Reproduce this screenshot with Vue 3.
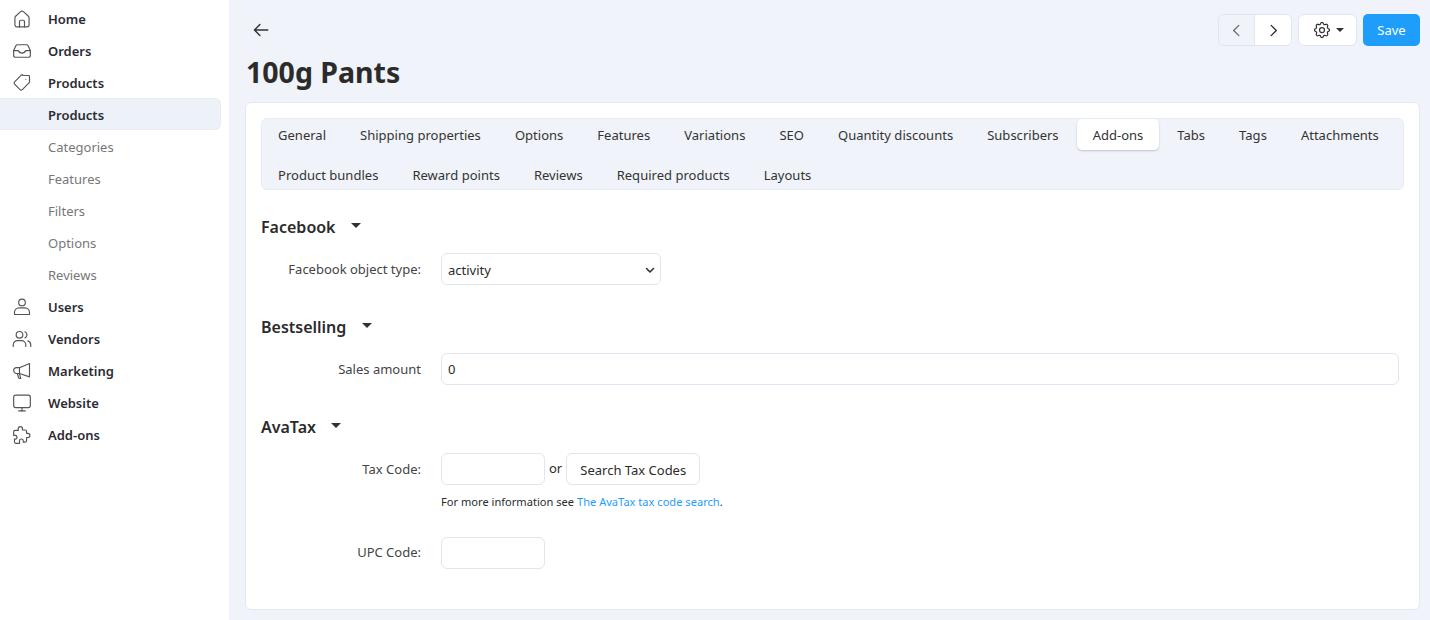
<template>
  <div class="page">
    <aside class="sidebar">
      <template v-for="item in menu" :key="item.label">
        <a class="nav-item" :class="{ sub: item.sub, active: item.active }">
          <svg v-if="item.icon" class="nav-icon" viewBox="0 0 24 24" fill="none" stroke="#555" stroke-width="1.4" stroke-linecap="round" stroke-linejoin="round">
            <path v-for="d in icons[item.icon]" :key="d" :d="d" />
          </svg>
          <span>{{ item.label }}</span>
        </a>
      </template>
    </aside>

    <main class="content">
      <div class="topbar">
        <svg class="back" viewBox="0 0 16 16" fill="none" stroke="#333" stroke-width="1.3" stroke-linecap="round" stroke-linejoin="round">
          <path d="M14 8H2.5M7 3.2 2.2 8 7 12.8" />
        </svg>
        <div class="actions">
          <div class="pager">
            <button class="pager-btn prev">
              <svg viewBox="0 0 16 16" fill="none" stroke="#6f6a6d" stroke-width="1.4" stroke-linecap="round" stroke-linejoin="round"><path d="M10.5 2.5 5 8l5.5 5.5" /></svg>
            </button>
            <button class="pager-btn">
              <svg viewBox="0 0 16 16" fill="none" stroke="#2f2a2d" stroke-width="1.4" stroke-linecap="round" stroke-linejoin="round"><path d="M5.5 2.5 11 8l-5.5 5.5" /></svg>
            </button>
          </div>
          <button class="gear-btn">
            <svg viewBox="0 0 24 24" fill="none" stroke="#333" stroke-width="1.5" stroke-linecap="round" stroke-linejoin="round">
              <path d="M10.3 4.3c.4-1.8 3-1.8 3.4 0a1.7 1.7 0 0 0 2.6 1.100c1.500-.9 3.300.8 2.400 2.400a1.700 1.700 0 0 0 1 2.500c1.800.4 1.800 3 0 3.400a1.700 1.700 0 0 0-1 2.600c.9 1.500-.9 3.300-2.400 2.400a1.700 1.700 0 0 0-2.600 1c-.4 1.800-3 1.800-3.400 0a1.700 1.700 0 0 0-2.600-1c-1.500.9-3.300-.9-2.400-2.400a1.700 1.700 0 0 0-1-2.600c-1.800-.4-1.800-3 0-3.400a1.700 1.700 0 0 0 1-2.500c-.9-1.600.9-3.300 2.400-2.400a1.700 1.700 0 0 0 2.600-1.100Z" />
              <circle cx="12" cy="12" r="3" />
            </svg>
            <span class="caret small"></span>
          </button>
          <button class="save-btn">Save</button>
        </div>
      </div>

      <h1 class="title">100g Pants</h1>

      <section class="card">
        <nav class="tabs">
          <a v-for="tab in tabs" :key="tab" class="tab" :class="{ active: tab === 'Add-ons' }">{{ tab }}</a>
        </nav>

        <h3 class="group-title">Facebook <span class="caret"></span></h3>
        <div class="field">
          <label>Facebook object type:</label>
          <div class="select">
            <span>activity</span>
            <svg viewBox="0 0 12 12" fill="none" stroke="#333" stroke-width="1.6" stroke-linecap="round" stroke-linejoin="round"><path d="M2.5 4.5 6 8l3.500-3.500" /></svg>
          </div>
        </div>

        <h3 class="group-title">Bestselling <span class="caret"></span></h3>
        <div class="field">
          <label>Sales amount</label>
          <input class="input wide" value="0" />
        </div>

        <h3 class="group-title">AvaTax <span class="caret"></span></h3>
        <div class="field tax">
          <label>Tax Code:</label>
          <div>
            <div class="tax-row">
              <input class="input short" />
              <span class="or">or</span>
              <button class="search-btn">Search Tax Codes</button>
            </div>
            <p class="hint">For more information see <a>The AvaTax tax code search</a>.</p>
          </div>
        </div>
        <div class="field upc">
          <label>UPC Code:</label>
          <input class="input short" />
        </div>
      </section>
    </main>
  </div>
</template>

<script setup>
const icons = {
  home: ['M3.500 19V10.500c0-.7.3-1.300.8-1.800l6-5.500c1-.9 2.400-.9 3.400 0l6 5.500c.5.5.8 1.100.8 1.800V19a2.500 2.500 0 0 1-2.500 2.500H6A2.500 2.500 0 0 1 3.500 19Z', 'M9 21.500V15a1.500 1.500 0 0 1 1.500-1.500h3A1.500 1.500 0 0 1 15 15v6.500'],
  inbox: ['M6.500 4.500h11a2 2 0 0 1 1.800 1.100L22 11.500V17a2.500 2.500 0 0 1-2.500 2.500h-15A2.500 2.500 0 0 1 2 17v-5.500l2.700-5.900a2 2 0 0 1 1.800-1.100Z', 'M2 11.500h5.500c.8 2 2.400 3 4.500 3s3.700-1 4.500-3H22'],
  tag: ['M13.500 3H20a1 1 0 0 1 1 1v6.500c0 .5-.2 1-.6 1.400l-8 8a2 2 0 0 1-2.800 0l-6.500-6.500a2 2 0 0 1 0-2.800l8-8c.4-.4.900-.6 1.400-.6Z', 'M16.500 7.500h.01'],
  user: ['M12 2.500a4 4 0 1 1 0 8 4 4 0 0 1 0-8Z', 'M3 21v-2.500a5.500 5.500 0 0 1 5.500-5.500h7a5.500 5.500 0 0 1 5.500 5.500V21H3Z'],
  users: ['M9 3a4 4 0 1 1 0 8 4 4 0 0 1 0-8Z', 'M1.500 21v-2a5 5 0 0 1 5-5h5a5 5 0 0 1 5 5v2', 'M15.500 3.300a4 4 0 0 1 0 7.400', 'M22.500 21v-2a5 5 0 0 0-3.500-4.700'],
  megaphone: ['M21 3v16L9 15H5.500a3.500 3.500 0 0 1 0-7H9L21 3Z', 'M9 8v7', 'M6.500 15l1.500 5.500a1 1 0 0 0 1 .5h1.500l-1.500-5.500'],
  monitor: ['M4.500 2.500h15A2.500 2.500 0 0 1 22 5v10a2.500 2.500 0 0 1-2.500 2.500h-15A2.500 2.500 0 0 1 2 15V5a2.500 2.500 0 0 1 2.500-2.500Z', 'M12 17.500v4', 'M8 21.500h8'],
  puzzle: ['M10 2a2.500 2.500 0 0 1 2.500 2.500V6H16a1.500 1.500 0 0 1 1.500 1.500V10h1.500a2.500 2.500 0 0 1 0 5h-1.500v4a1.500 1.500 0 0 1-1.500 1.500h-2.500V19a2.200 2.200 0 0 0-4.500 0v3H4.500A1.500 1.500 0 0 1 3 20.500V17h1.200a2.300 2.300 0 0 0 0-4.500H2V8a1.500 1.500 0 0 1 1.500-1.500h4V4.500A2.500 2.500 0 0 1 10 2Z']
}

const menu = [
  { label: 'Home', icon: 'home' },
  { label: 'Orders', icon: 'inbox' },
  { label: 'Products', icon: 'tag' },
  { label: 'Products', active: true },
  { label: 'Categories', sub: true },
  { label: 'Features', sub: true },
  { label: 'Filters', sub: true },
  { label: 'Options', sub: true },
  { label: 'Reviews', sub: true },
  { label: 'Users', icon: 'user' },
  { label: 'Vendors', icon: 'users' },
  { label: 'Marketing', icon: 'megaphone' },
  { label: 'Website', icon: 'monitor' },
  { label: 'Add-ons', icon: 'puzzle' }
]

const tabs = [
  'General', 'Shipping properties', 'Options', 'Features', 'Variations', 'SEO',
  'Quantity discounts', 'Subscribers', 'Add-ons', 'Tabs', 'Tags', 'Attachments',
  'Product bundles', 'Reward points', 'Reviews', 'Required products', 'Layouts'
]
</script>

<style>
html, body {
  margin: 0;
  background: #f0f3f9;
}
</style>

<style scoped>
.page {
  display: flex;
  height: 620px;
  overflow: hidden;
  font-family: "Noto Sans", "Open Sans", sans-serif;
  font-size: 13px;
  color: #2b2b2b;
  background: #f0f3f9;
}

.sidebar {
  flex: none;
  box-sizing: border-box;
  width: 229px;
  padding: 3px 8px 0 0;
  background: #fff;
}

.nav-item {
  position: relative;
  display: flex;
  align-items: center;
  height: 32px;
  padding-left: 48px;
  font-weight: 600;
  color: #2b2b33;
}

.nav-item.sub {
  font-weight: 400;
  color: #777;
}

.nav-item.active {
  box-sizing: border-box;
  margin: -1px 0 1px;
  padding-top: 2px;
  background: #edf1f8;
  border: 1px solid #e6ebf4;
  border-left: none;
  border-radius: 0 6px 6px 0;
}

.nav-icon {
  position: absolute;
  left: 12px;
  top: 6px;
  width: 20px;
  height: 20px;
}

.content {
  flex: 1;
  min-width: 0;
  padding: 14px 10px 0 16px;
}

.topbar {
  display: flex;
  align-items: center;
  justify-content: space-between;
  height: 32px;
}

.back {
  width: 18px;
  height: 18px;
  margin-left: 7px;
}

.actions {
  display: flex;
  gap: 6px;
}

.pager {
  display: flex;
  border: 1px solid #dfe5f1;
  border-radius: 6px;
  overflow: hidden;
}

.pager-btn {
  display: flex;
  align-items: center;
  justify-content: center;
  width: 36px;
  height: 30px;
  padding: 0;
  border: none;
  background: #fff;
}

.pager-btn.prev {
  background: #f0f3f9;
  border-right: 1px solid #dfe5f1;
}

.pager-btn svg {
  width: 15px;
  height: 15px;
}

.gear-btn {
  display: flex;
  align-items: center;
  justify-content: center;
  gap: 4px;
  box-sizing: border-box;
  width: 59px;
  height: 32px;
  padding: 0;
  border: 1px solid #dfe5f1;
  border-radius: 6px;
  background: #fff;
}

.gear-btn svg {
  width: 20px;
  height: 20px;
}

.save-btn {
  width: 57px;
  height: 32px;
  padding: 0;
  border: none;
  border-radius: 5px;
  background: #1e9dfa;
  color: #fff;
  font: inherit;
}

.caret {
  display: inline-block;
  width: 0;
  height: 0;
  margin-left: 11px;
  vertical-align: 5px;
  border-top: 5px solid #333;
  border-left: 5px solid transparent;
  border-right: 5px solid transparent;
}

.caret.small {
  margin-left: 0;
  vertical-align: 3px;
  border-top-width: 4px;
  border-left-width: 4px;
  border-right-width: 4px;
}

.title {
  margin: 8px 0 12px 1px;
  font-size: 28.500px;
  line-height: 36px;
  font-weight: 700;
  color: #2b2b2b;
}

.card {
  box-sizing: border-box;
  height: 508px;
  padding: 15px;
  background: #fff;
  border: 1px solid #e3e8f3;
  border-radius: 6px;
}

.tabs {
  display: flex;
  flex-wrap: wrap;
  box-sizing: border-box;
  height: 72px;
  align-content: flex-start;
  background: #f0f3f9;
  border: 1px solid #e8ecf5;
  border-radius: 6px;
}

.tab {
  display: flex;
  align-items: center;
  box-sizing: border-box;
  height: 31px;
  margin: 0 2px 9px 0;
  padding: 0 16px;
  color: #333;
  letter-spacing: 0.015px;
  border-radius: 5px;
}

.tab.active {
  background: #fff;
  box-shadow: 0 1px 2px rgba(40, 60, 100, 0.25);
}

.group-title {
  margin: 24px 0 0;
  font-size: 16px;
  line-height: 26px;
  font-weight: 600;
  color: #2b2b2b;
}

.field {
  display: flex;
  align-items: center;
  margin-top: 13px;
  margin-bottom: 29px;
}

.field label {
  flex: none;
  width: 160px;
  margin-right: 20px;
  text-align: right;
  color: #444;
}

.select {
  display: flex;
  align-items: center;
  justify-content: space-between;
  box-sizing: border-box;
  width: 220px;
  height: 32px;
  padding: 1px 4px 0 6px;
  border: 1px solid #e0e5f1;
  border-radius: 6px;
}

.select svg {
  width: 12px;
  height: 12px;
}

.input {
  box-sizing: border-box;
  height: 32px;
  padding: 0 6px;
  border: 1px solid #e0e5f1;
  border-radius: 6px;
  font: inherit;
  color: #2b2b2b;
  outline: none;
}

.input.wide {
  flex: 1;
  margin-right: 5px;
}

.input.short {
  width: 104px;
}

.field.tax {
  align-items: flex-start;
  margin-bottom: 0;
}

.field.tax label {
  line-height: 32px;
}

.tax-row {
  display: flex;
  align-items: center;
}

.or {
  margin: -2px 4px 0;
}

.search-btn {
  box-sizing: border-box;
  height: 32px;
  width: 134px;
  padding: 1px 0 0;
  background: #fff;
  border: 1px solid #e0e5f1;
  border-radius: 6px;
  font: inherit;
  color: #2b2b2b;
}

.hint {
  margin: 9px 0 0;
  font-size: 11.100px;
  line-height: 16px;
}

.hint a {
  color: #1e9dfa;
}

.field.upc {
  margin-top: 27px;
}

.field.upc label {
  margin-bottom: 2px;
}
</style>
